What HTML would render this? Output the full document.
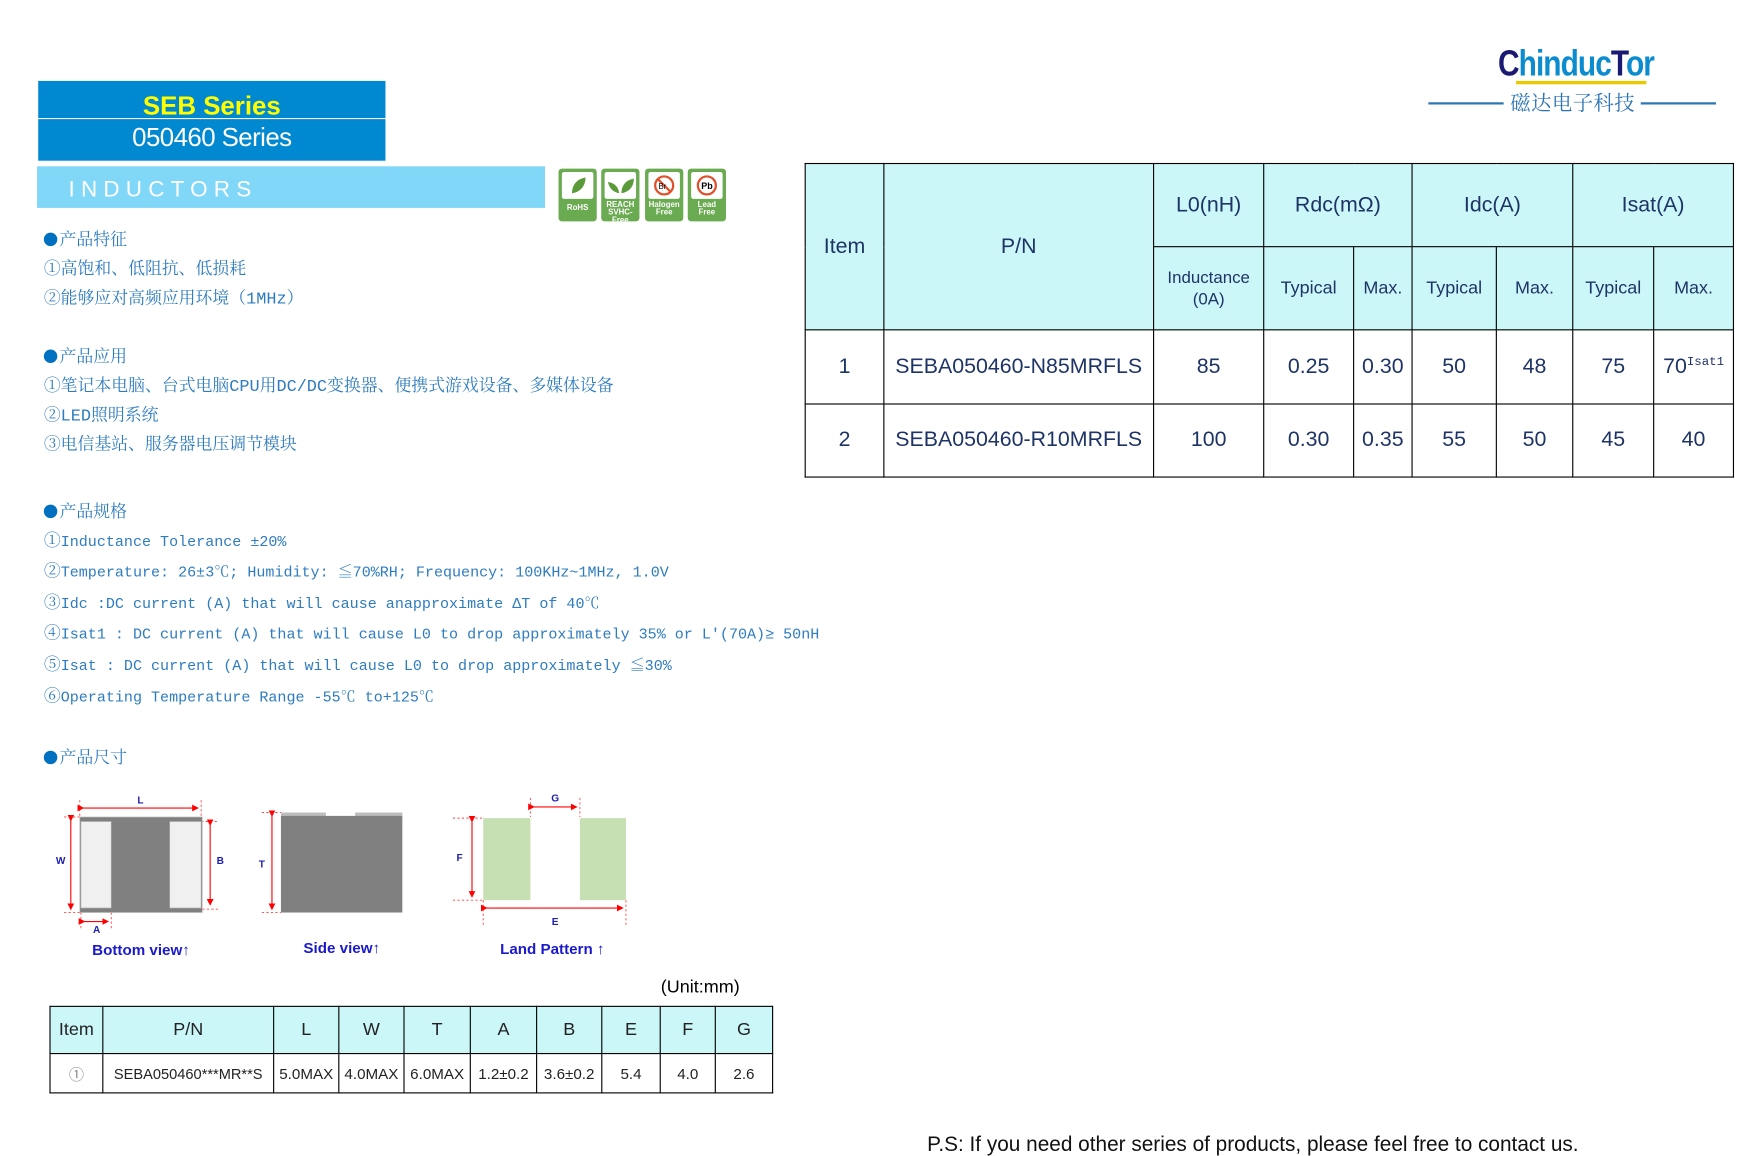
<!DOCTYPE html>
<html><head><meta charset="utf-8">
<style>
html,body{margin:0;padding:0;background:#fff;}
body{width:1761px;height:1155px;overflow:hidden;position:relative;}
#p{position:absolute;left:0;top:0;width:1567px;height:1028px;transform:scale(1.1238);transform-origin:0 0;font-family:"Liberation Sans","Noto Sans CJK SC",sans-serif;}
.a{position:absolute;white-space:nowrap;}
.body{position:absolute;left:39px;color:#2e7cc0;font-family:"Liberation Mono","Noto Serif CJK SC",serif;font-size:15px;white-space:nowrap;line-height:18px;}
.body.s{font-size:13.4px;}
.body .c{font-size:15px;}
.dot{display:inline-block;width:12px;height:12px;border-radius:50%;background:#0070c0;margin-right:2px;vertical-align:-1px;}
table{border-collapse:collapse;position:absolute;}
td{border:1.3px solid #000;text-align:center;vertical-align:middle;color:#1f3466;padding:0;}
.big td{font-size:19px;}
.big .h{background:#ccf7f8;}
.sm td{font-size:13.5px;color:#222;}
.sm .h{background:#ccf7f8;font-size:16px;}
.badge{position:absolute;top:150px;width:32px;height:45px;border:1.5px solid #6aaa50;border-radius:3px;background:#6aaa50;}
.badge .w{position:absolute;left:2px;top:2px;width:28px;height:24px;background:#fff;border-radius:2px;}
.badge .t{position:absolute;left:0;right:0;top:28px;color:#fff;font-size:7px;font-weight:bold;text-align:center;line-height:7px;}
</style></head><body><div id="p">

<!-- logo -->
<div class="a" style="left:1333px;top:38px;font-family:'Liberation Sans',sans-serif;font-weight:bold;font-size:32px;letter-spacing:-1px;color:#0b8ccf;transform:scaleX(0.83);transform-origin:0 0;"><span style="color:#1a1a72">C</span>hinduc<span style="color:#1a1a72">T</span>or</div>
<div class="a" style="left:1349px;top:72px;width:116px;height:3px;background:#e8c900;"></div>
<div class="a" style="left:1271px;top:91px;width:67px;height:2px;background:#2e75b6;"></div>
<div class="a" style="left:1460px;top:91px;width:67px;height:2px;background:#2e75b6;"></div>
<div class="a" style="left:1344px;top:80px;font-family:'Noto Serif CJK SC',serif;font-size:18px;letter-spacing:0.5px;color:#2e75b6;line-height:22px;">磁达电子科技</div>

<!-- header -->
<div class="a" style="left:34px;top:72px;width:309px;height:71px;background:#0088d1;"></div>
<div class="a" style="left:34px;top:105px;width:309px;height:1px;background:#fff;"></div>
<div class="a" style="left:34px;top:80px;width:309px;text-align:center;color:#ffff00;font-weight:bold;font-size:23px;line-height:28px;">SEB Series</div>
<div class="a" style="left:34px;top:108px;width:309px;text-align:center;color:#fff;font-size:23px;line-height:28px;letter-spacing:-0.5px;">050460 Series</div>
<div class="a" style="left:33px;top:148px;width:452px;height:37px;background:#80d7f8;"></div>
<div class="a" style="left:61px;top:156px;color:#fff;font-size:20px;letter-spacing:5.5px;line-height:26px;">INDUCTORS</div>

<div class="badge" style="left:497px"><div class="w"><svg width="28" height="24"><path d="M9 19 C9 10 15 6 21 5 C21 13 16 18 9 19Z" fill="#5a9a3a"/></svg></div><div class="t" style="top:31px">RoHS</div></div>
<div class="badge" style="left:535px"><div class="w"><svg width="28" height="24"><path d="M13 19 C7 18 4 14 3 9 C9 10 12 13 13 19Z" fill="#5a9a3a"/><path d="M15 19 C15 11 20 7 26 6 C26 14 21 18 15 19Z" fill="#5a9a3a"/></svg></div><div class="t">REACH<br>SVHC-Free</div></div>
<div class="badge" style="left:574px"><div class="w"><svg width="28" height="24"><circle cx="14" cy="12" r="8" fill="none" stroke="#e0502a" stroke-width="2"/><line x1="8" y1="6" x2="20" y2="18" stroke="#e0502a" stroke-width="2"/><text x="9" y="15" font-size="7" font-family="Liberation Sans" fill="#000">Br</text></svg></div><div class="t">Halogen<br>Free</div></div>
<div class="badge" style="left:612px"><div class="w"><svg width="28" height="24"><circle cx="14" cy="12" r="8" fill="none" stroke="#e0502a" stroke-width="2"/><text x="9" y="15" font-size="8" font-weight="bold" font-family="Liberation Sans" fill="#000">Pb</text></svg></div><div class="t">Lead<br>Free</div></div>

<!-- body text -->
<div class="body" style="top:206px"><span class="dot"></span>产品特征</div>
<div class="body" style="top:232px">①高饱和、低阻抗、低损耗</div>
<div class="body" style="top:258px">②能够应对高频应用环境（1MHz）</div>
<div class="body" style="top:310px"><span class="dot"></span>产品应用</div>
<div class="body" style="top:336px">①笔记本电脑、台式电脑CPU用DC/DC变换器、便携式游戏设备、多媒体设备</div>
<div class="body" style="top:362px">②LED照明系统</div>
<div class="body" style="top:388px">③电信基站、服务器电压调节模块</div>
<div class="body" style="top:448px"><span class="dot"></span>产品规格</div>
<div class="body s" style="top:474px"><span class="c">①</span>Inductance Tolerance ±20%</div>
<div class="body s" style="top:501px"><span class="c">②</span>Temperature: 26±3℃; Humidity: ≦70%RH; Frequency: 100KHz~1MHz, 1.0V</div>
<div class="body s" style="top:529px"><span class="c">③</span>Idc :DC current (A) that will cause anapproximate ΔT of 40℃</div>
<div class="body s" style="top:556px"><span class="c">④</span>Isat1 : DC current (A) that will cause L0 to drop approximately 35% or L'(70A)≥ 50nH</div>
<div class="body s" style="top:584px"><span class="c">⑤</span>Isat : DC current (A) that will cause L0 to drop approximately ≦30%</div>
<div class="body s" style="top:612px"><span class="c">⑥</span>Operating Temperature Range -55℃ to+125℃</div>
<div class="body" style="top:667px"><span class="dot"></span>产品尺寸</div>

<!-- diagrams -->
<svg class="a" style="left:0;top:700px" width="600" height="160" viewBox="0 700 600 160">
<defs><marker id="ar" markerWidth="6" markerHeight="6" refX="5" refY="3" orient="auto"><path d="M0 0 L6 3 L0 6Z" fill="#f00"/></marker></defs>
<g stroke="#f44" stroke-width="0.8" stroke-dasharray="2 2">
<line x1="71" y1="712" x2="71" y2="727"/><line x1="179" y1="712" x2="179" y2="727"/>
<line x1="57" y1="727" x2="71" y2="727"/><line x1="57" y1="812" x2="71" y2="812"/>
<line x1="179" y1="731" x2="194" y2="731"/><line x1="180" y1="809" x2="194" y2="809"/>
<line x1="72" y1="812" x2="72" y2="826"/><line x1="99" y1="812" x2="99" y2="826"/>
<line x1="233" y1="723" x2="250" y2="723"/><line x1="233" y1="812" x2="250" y2="812"/>
<line x1="472" y1="710" x2="472" y2="727"/><line x1="516" y1="710" x2="516" y2="727"/>
<line x1="403" y1="728" x2="430" y2="728"/><line x1="403" y1="801" x2="430" y2="801"/>
<line x1="430" y1="801" x2="430" y2="823"/><line x1="557" y1="801" x2="557" y2="823"/>
</g>
<g stroke="#f00" stroke-width="1" marker-end="url(#ar)" marker-start="url(#ar)">
<line x1="74" y1="719" x2="176" y2="719"/>
<line x1="63" y1="730" x2="63" y2="809"/>
<line x1="187" y1="734" x2="187" y2="805"/>
<line x1="75" y1="820" x2="96" y2="820"/>
<line x1="242" y1="726" x2="242" y2="809"/>
<line x1="475" y1="718" x2="513" y2="718"/>
<line x1="420" y1="731" x2="420" y2="798"/>
<line x1="433" y1="808" x2="554" y2="808"/>
</g>
<rect x="71" y="727" width="109" height="85" fill="#808080" stroke="#bbb" stroke-width="0.6"/>
<rect x="72" y="731" width="27" height="77" fill="#f0f0f0" stroke="#aaa" stroke-width="0.6"/>
<rect x="151" y="731" width="28" height="77" fill="#f0f0f0" stroke="#aaa" stroke-width="0.6"/>
<rect x="250" y="723" width="40" height="5" fill="#bdbdbd"/>
<rect x="316" y="723" width="42" height="5" fill="#bdbdbd"/>
<rect x="250" y="726" width="108" height="86" fill="#808080"/>
<rect x="430" y="728" width="42" height="73" fill="#c6e0b4"/>
<rect x="516" y="728" width="41" height="73" fill="#c6e0b4"/>
<g font-family="Liberation Sans" font-size="9" font-weight="bold" fill="#2020b0" text-anchor="middle">
<text x="125" y="715">L</text><text x="54" y="769">W</text><text x="196" y="769">B</text><text x="86" y="830">A</text>
<text x="233" y="772">T</text><text x="494" y="713">G</text><text x="409" y="766">F</text><text x="494" y="823">E</text>
</g>
<g font-family="Liberation Sans" font-size="13.5" font-weight="bold" fill="#1a1acc">
<text x="82" y="850">Bottom view↑</text><text x="270" y="848">Side view↑</text><text x="445" y="849">Land Pattern ↑</text>
</g>
</svg>

<!-- small table -->
<div class="a" style="left:588px;top:870px;font-size:16px;color:#000;">(Unit:mm)</div>
<table class="sm" style="left:44px;top:895px;width:644px;">
<tr style="height:42px"><td class="h" style="width:46px">Item</td><td class="h" style="width:151px">P/N</td><td class="h" style="width:57px">L</td><td class="h" style="width:57px">W</td><td class="h" style="width:58px">T</td><td class="h" style="width:58px">A</td><td class="h" style="width:57px">B</td><td class="h" style="width:51px">E</td><td class="h" style="width:48px">F</td><td class="h">G</td></tr>
<tr style="height:35px"><td style="color:#888">①</td><td style="font-size:13px">SEBA050460***MR**S</td><td>5.0MAX</td><td>4.0MAX</td><td>6.0MAX</td><td>1.2±0.2</td><td>3.6±0.2</td><td>5.4</td><td>4.0</td><td>2.6</td></tr>
</table>

<!-- big table -->
<table class="big" style="left:716px;top:145px;width:827px;">
<tr style="height:74px"><td class="h" rowspan="2" style="width:69px">Item</td><td class="h" rowspan="2" style="width:239px">P/N</td><td class="h" style="width:97px">L0(nH)</td><td class="h" colspan="2">Rdc(mΩ)</td><td class="h" colspan="2">Idc(A)</td><td class="h" colspan="2">Isat(A)</td></tr>
<tr style="height:74px"><td class="h" style="font-size:15px;line-height:19px">Inductance<br>(0A)</td><td class="h" style="font-size:16px;width:79px">Typical</td><td class="h" style="font-size:16px;width:51px">Max.</td><td class="h" style="font-size:16px;width:74px">Typical</td><td class="h" style="font-size:16px;width:67px">Max.</td><td class="h" style="font-size:16px;width:71px">Typical</td><td class="h" style="font-size:16px">Max.</td></tr>
<tr style="height:66px"><td>1</td><td>SEBA050460-N85MRFLS</td><td>85</td><td>0.25</td><td>0.30</td><td>50</td><td>48</td><td>75</td><td>70<sup style="font-family:'Liberation Mono',monospace;font-size:11px">Isat1</sup></td></tr>
<tr style="height:65px"><td>2</td><td>SEBA050460-R10MRFLS</td><td>100</td><td>0.30</td><td>0.35</td><td>55</td><td>50</td><td>45</td><td>40</td></tr>
</table>

<div class="a" style="left:825px;top:1007px;font-size:18.5px;color:#111;">P.S: If you need other series of products, please feel free to contact us.</div>

</div></body></html>
